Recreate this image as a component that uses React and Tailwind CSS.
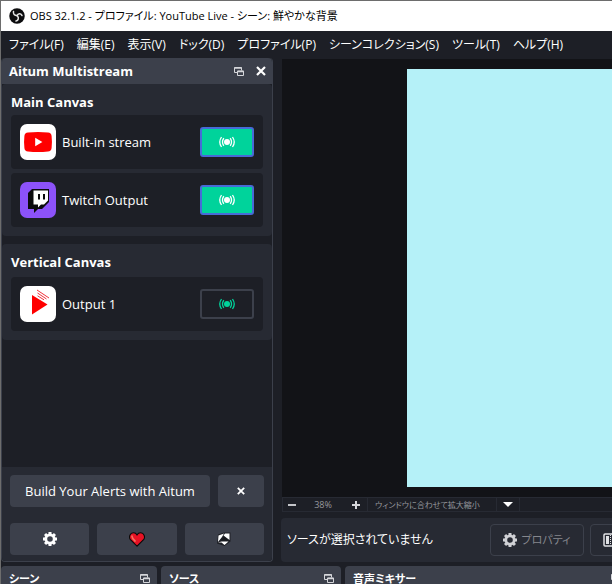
import React from 'react';
import { clsx } from 'clsx';

const MENU_ITEMS = [
  'ファイル(F)', '編集(E)', '表示(V)', 'ドック(D)', 'プロファイル(P)',
  'シーンコレクション(S)', 'ツール(T)', 'ヘルプ(H)',
];

const GROUPS = [
  {
    title: 'Main Canvas',
    outputs: [
      { name: 'Built-in stream', Logo: YouTubeLogo, active: true },
      { name: 'Twitch Output', Logo: TwitchLogo, active: true },
    ],
  },
  {
    title: 'Vertical Canvas',
    outputs: [{ name: 'Output 1', Logo: ShortsLogo, active: false }],
  },
];

/* ── Icons ── */

function ObsLogo() {
  return (
    <svg viewBox="0 0 32 32" className="w-4 h-4 shrink-0" aria-hidden="true">
      <circle cx="16" cy="16" r="15.5" fill="#0c0c0e" />
      <g fill="none" stroke="#e4e4e4" strokeWidth="3" strokeLinecap="round">
        <path d="M9 7c-1 5 2 8 7 8" />
        <path d="M26 15c-3-5-8-4-10 0.500" />
        <path d="M14 26c5-1 6-6 3-10" />
      </g>
    </svg>
  );
}

function YouTubeLogo() {
  return (
    <svg viewBox="0 0 36 36" className="w-9 h-9 shrink-0" aria-hidden="true">
      <rect width="36" height="36" rx="7" fill="#fff" />
      <path d="M8 8.500Q18 7.500 28 8.500Q31.300 8.800 31.600 12Q32.300 18 31.600 24Q31.300 27.200 28 27.500Q18 28.500 8 27.500Q4.700 27.200 4.400 24Q3.700 18 4.400 12Q4.700 8.800 8 8.500Z" fill="#f00" />
      <path d="M15.200 13.800v8.400l7.200-4.200z" fill="#fff" />
    </svg>
  );
}

function TwitchLogo() {
  return (
    <svg viewBox="0 0 36 36" className="w-9 h-9 shrink-0" aria-hidden="true">
      <rect width="36" height="36" rx="7" fill="#8c52f9" />
      <path d="M12 7h17v13l-7 7h-4l-4 4v-4H8V11z" fill="#0b0b0d" />
      <path d="M13.500 8.500H28v10l-4 4h-3l-3 3v-3h-4.500z" fill="#fff" />
      <path d="M18 12h2v5.500h-2zM23 12h2v5.500h-2z" fill="#0b0b0d" />
    </svg>
  );
}

function ShortsLogo() {
  return (
    <svg viewBox="0 0 36 36" className="w-9 h-9 shrink-0" aria-hidden="true">
      <rect width="36" height="36" rx="7" fill="#fff" />
      <path d="M12 9v19.500l15.500-10z" fill="#f00" />
      <path d="M17 4l12 8M17.500 7l9 6M17.500 9.800l6.500 4" stroke="#f0323c" strokeWidth="1" fill="none" />
    </svg>
  );
}

function BroadcastIcon({ className }) {
  return (
    <svg viewBox="0 0 16 12" className={clsx('w-4 h-3', className)} fill="none" stroke="currentColor" strokeWidth="1.300" aria-hidden="true">
      <circle cx="8" cy="6" r="3" fill="currentColor" stroke="none" />
      <path d="M4.800 2.200Q2.200 6 4.800 9.800M11.200 2.200Q13.800 6 11.200 9.800M2.500 1Q-1 6 2.500 11M13.500 1Q17 6 13.500 11" />
    </svg>
  );
}

function GearIcon({ className }) {
  return (
    <svg viewBox="0 0 14 14" className={clsx('w-3.5 h-3.5 shrink-0', className)} aria-hidden="true">
      <circle cx="7" cy="7" r="4.200" fill="none" stroke="currentColor" strokeWidth="2.800" />
      <path d="M7 0v2M7 12v2M0 7h2M12 7h2M2.050 2.050l1.400 1.400M10.550 10.550l1.400 1.400M2.050 11.950l1.400-1.400M10.550 3.450l1.400-1.400" stroke="currentColor" strokeWidth="3" />
    </svg>
  );
}

function HeartIcon() {
  return (
    <svg viewBox="0 0 16 15" className="w-4 h-[15px]" aria-hidden="true">
      <path d="M8 14.200L1.200 7.400C-.4 5.200.9.800 4.400.800 6.300.800 7.400 1.800 8 2.900 8.600 1.800 9.700.8 11.600.8c3.500 0 4.800 4.400 3.200 6.600z" fill="#e81224" stroke="#0a0a0a" strokeWidth="1.100" />
      <path d="M3 4.200q.2 2.600 3 4.800" fill="none" stroke="#f4715f" strokeWidth="1.700" strokeLinecap="round" />
    </svg>
  );
}

function AitumIcon() {
  return (
    <svg viewBox="0 0 16 16" className="w-4 h-4" aria-hidden="true">
      <path d="M2 3.500L8 1.500h6.500v9L8.500 15 1 12.500z" fill="#17181d" opacity=".8" />
      <path d="M2.500 4.500L8 2.500 6 6 2 11zM9 2.500h4.500V9L7.500 4.500z" fill="#fff" />
      <path d="M2 11.500l3.500-1h7L8.500 14l-3-2.500z" fill="#fff" />
      <path d="M8.500 6l3.500 3.500H5z" fill="#17181d" />
    </svg>
  );
}

function FloatIcon() {
  return (
    <svg viewBox="0 0 10 9" className="w-2.5 h-[9px]" fill="none" stroke="#d5d6da" aria-hidden="true">
      <path d="M3 5.500H.500v-5h7v3" />
      <path d="M.500 1h7M3.500 4.500h6" strokeWidth="1.600" />
      <path d="M3.500 4v4.500h6V4z" />
    </svg>
  );
}

function CrossIcon({ className }) {
  return (
    <svg viewBox="0 0 10 10" className={className} stroke="#fff" strokeWidth="2.200" aria-hidden="true">
      <path d="M1 1l8 8M9 1L1 9" />
    </svg>
  );
}

function FilterIcon() {
  return (
    <svg viewBox="0 0 14 14" className="w-3.5 h-3.5 shrink-0" aria-hidden="true">
      <rect x="1" y="1" width="12" height="12" rx="1" fill="none" stroke="#e0e1e4" strokeWidth="1.500" />
      <path d="M3 3h3v8H3z" fill="#e0e1e4" />
      <path d="M7.500 2v10M9.500 2v10" stroke="#e0e1e4" strokeDasharray="1 1" />
    </svg>
  );
}

/* ── Multistream dock ── */

function OutputRow({ name, Logo, active }) {
  return (
    <li className="flex items-center rounded bg-[#1d1f26] h-[54px] px-[9px]">
      <Logo />
      <span className="ml-1.5 flex-1">{name}</span>
      <button
        type="button"
        aria-label={`Stream ${name}`}
        aria-pressed={active}
        className={clsx(
          'flex items-center justify-center w-[54px] h-[30px] rounded-[3px] border-2',
          active ? 'bg-[#00d39b] border-[#476bd7] text-white' : 'border-[#3c404b] text-[#00d39b]'
        )}
      >
        <BroadcastIcon />
      </button>
    </li>
  );
}

function MultistreamDock() {
  const footerBtn = 'flex items-center justify-center h-8 rounded bg-[#3c404b]';
  return (
    <aside className="flex flex-col w-[272px] shrink-0 border border-t-0 border-[#3c404b] rounded">
      <header className="flex items-center h-[26px] shrink-0 pl-[7px] pr-1.5 rounded-t bg-[#3c404b]">
        <h1 className="flex-1 font-bold">Aitum Multistream</h1>
        <button type="button" aria-label="Float dock" className="mr-3"><FloatIcon /></button>
        <button type="button" aria-label="Close dock"><CrossIcon className="w-2.5 h-2.5" /></button>
      </header>

      <div className="flex-1 flex flex-col gap-2">
        {GROUPS.map(group => (
          <section key={group.title} className="group rounded bg-[#272a33] p-[9px]">
            <h2 className="font-bold leading-[18px] mb-1 group-last:mb-1.5">{group.title}</h2>
            <ul className="flex flex-col gap-1">
              {group.outputs.map(output => <OutputRow key={output.name} {...output} />)}
            </ul>
          </section>
        ))}
      </div>

      <footer className="bg-[#272a33] rounded-b px-2 pt-2 pb-1.5 space-y-4">
        <div className="flex gap-2">
          <button type="button" className={clsx(footerBtn, 'flex-1')}>Build Your Alerts with Aitum</button>
          <button type="button" aria-label="Dismiss" className={clsx(footerBtn, 'w-[46px]')}>
            <CrossIcon className="w-2 h-2" />
          </button>
        </div>
        <div className="grid grid-cols-3 gap-2">
          <button type="button" aria-label="Settings" className={footerBtn}><GearIcon /></button>
          <button type="button" aria-label="Donate" className={footerBtn}><HeartIcon /></button>
          <button type="button" aria-label="Aitum" className={footerBtn}><AitumIcon /></button>
        </div>
      </footer>
    </aside>
  );
}

/* ── Preview ── */

function Preview() {
  return (
    <main className="flex-1 min-w-0 flex flex-col ml-2">
      <div className="flex-1 ml-px mt-px bg-[#121317] pl-[125px] py-2.5">
        <div className="h-full bg-[#b5f1f8]" />
      </div>

      <div className="flex items-center h-[15px] shrink-0 ml-px border border-r-0 border-[#272a33] text-[9px] text-[#96989d]">
        <button type="button" aria-label="Zoom out" className="w-[18px] flex justify-center">
          <span className="w-2 h-0.5 bg-[#c4c5c9]" />
        </button>
        <span className="w-11 text-center">38%</span>
        <button type="button" aria-label="Zoom in" className="w-[22px] flex justify-center">
          <svg viewBox="0 0 8 8" className="w-2 h-2" stroke="#d5d6da" strokeWidth="2"><path d="M4 0v8M0 4h8" /></svg>
        </button>
        <button type="button" className="flex items-center h-full border-l border-[#272a33] pl-[7px] text-[8px]">
          <span className="w-[121px] text-left whitespace-nowrap">ウィンドウに合わせて拡大縮小</span>
          <span className="flex items-center justify-center w-6 h-[13px] border-x border-[#272a33]">
            <svg viewBox="0 0 10 5" className="w-2.5 h-[5px]"><path d="M0 0h10L5 5z" fill="#fff" /></svg>
          </span>
        </button>
      </div>

      <div className="flex items-center h-11 shrink-0 mt-1.5 pl-1.5 rounded-l bg-[#272a33] whitespace-nowrap overflow-hidden">
        <p className="w-[203px] shrink-0 text-[12px]">ソースが選択されていません</p>
        <button type="button" className="flex items-center justify-center gap-1 w-[94px] h-8 shrink-0 rounded border border-[#3c404b] text-[11px] text-[#85878d]">
          <GearIcon className="text-[#d0d1d5]" />
          プロパティ
        </button>
        <button type="button" aria-label="フィルタ" className="flex items-center w-[94px] h-8 shrink-0 ml-1.5 pl-3 rounded border border-[#3c404b]">
          <FilterIcon />
        </button>
      </div>
    </main>
  );
}

function DockHeader({ title, className }) {
  return (
    <section className={clsx('flex items-center h-6 pl-2 pr-[7px] rounded-t bg-[#3c404b]', className)}>
      <h2 className="flex-1 font-bold text-[11px] leading-none">{title}</h2>
      <button type="button" aria-label={`Float ${title}`}><FloatIcon /></button>
    </section>
  );
}

export default function App() {
  return (
    <div className="flex flex-col h-screen overflow-hidden border-t border-l border-[#6d6d6d] bg-[#1d1f26] text-white text-[13px] leading-4 font-['Open_Sans','Noto_Sans_CJK_JP',sans-serif] [font-feature-settings:'palt']">
      <header className="flex items-center gap-[5px] h-[30px] shrink-0 pl-2 bg-white text-black text-[11px] whitespace-nowrap">
        <ObsLogo />
        OBS 32.1.2 - プロファイル: YouTube Live - シーン: 鮮やかな背景
      </header>

      <nav className="flex items-center gap-[13px] h-[27px] shrink-0 pl-2 text-[12px] whitespace-nowrap">
        {MENU_ITEMS.map(item => <button key={item} type="button">{item}</button>)}
      </nav>

      <div className="flex-1 min-h-0 flex">
        <MultistreamDock />
        <Preview />
      </div>

      <div className="flex gap-1 mt-1 h-[18px] shrink-0 overflow-hidden">
        <DockHeader title="シーン" className="w-[156px] shrink-0" />
        <DockHeader title="ソース" className="w-[180px] shrink-0" />
        <DockHeader title="音声ミキサー" className="flex-1 -mr-4" />
      </div>
    </div>
  );
}
